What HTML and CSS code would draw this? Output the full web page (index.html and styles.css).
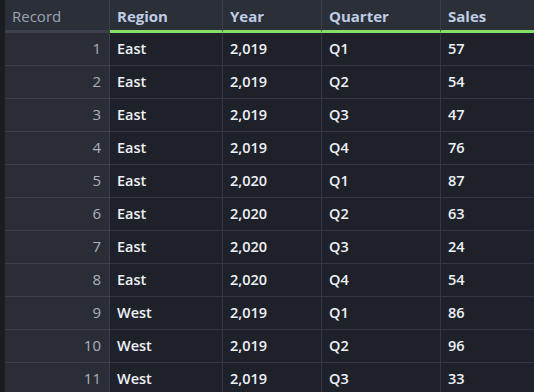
FILE: index.html
```html
<!DOCTYPE html>
<html>
<head>
<meta charset="utf-8">
<link rel="stylesheet" href="styles.css">
</head>
<body>
<div class="grid">
  <div class="hcell rec">Record</div>
  <div class="hcell col">Region</div>
  <div class="hcell col">Year</div>
  <div class="hcell col">Quarter</div>
  <div class="hcell col last">Sales</div>

  <div class="cell num">1</div><div class="cell">East</div><div class="cell">2,019</div><div class="cell">Q1</div><div class="cell last">57</div>
  <div class="cell num">2</div><div class="cell">East</div><div class="cell">2,019</div><div class="cell">Q2</div><div class="cell last">54</div>
  <div class="cell num">3</div><div class="cell">East</div><div class="cell">2,019</div><div class="cell">Q3</div><div class="cell last">47</div>
  <div class="cell num">4</div><div class="cell">East</div><div class="cell">2,019</div><div class="cell">Q4</div><div class="cell last">76</div>
  <div class="cell num">5</div><div class="cell">East</div><div class="cell">2,020</div><div class="cell">Q1</div><div class="cell last">87</div>
  <div class="cell num">6</div><div class="cell">East</div><div class="cell">2,020</div><div class="cell">Q2</div><div class="cell last">63</div>
  <div class="cell num">7</div><div class="cell">East</div><div class="cell">2,020</div><div class="cell">Q3</div><div class="cell last">24</div>
  <div class="cell num">8</div><div class="cell">East</div><div class="cell">2,020</div><div class="cell">Q4</div><div class="cell last">54</div>
  <div class="cell num">9</div><div class="cell">West</div><div class="cell">2,019</div><div class="cell">Q1</div><div class="cell last">86</div>
  <div class="cell num">10</div><div class="cell">West</div><div class="cell">2,019</div><div class="cell">Q2</div><div class="cell last">96</div>
  <div class="cell num">11</div><div class="cell">West</div><div class="cell">2,019</div><div class="cell">Q3</div><div class="cell last">33</div>
</div>
</body>
</html>
```
FILE: styles.css
```css
html, body {
  margin: 0;
  padding: 0;
  background: #1e2129;
  overflow: hidden;
}
body {
  width: 534px;
  height: 392px;
  font-family: "Open Sans", "Noto Sans", sans-serif;
  font-size: 14.5px;
}
.grid {
  display: grid;
  grid-template-columns: 105px 113px 99px 119px 1fr;
  grid-auto-rows: 33px;
  padding-left: 5px;
  background: #1a1c22;
}
.hcell {
  box-sizing: border-box;
  background: #2b2f38;
  border-right: 1px solid #3b404c;
  display: flex;
  align-items: center;
  padding-left: 7px;
  padding-top: 2px;
  height: 33px;
  font-size: 15px;
}
.hcell.rec {
  color: #9ba3b2;
  padding-left: 7px;
  border-bottom: 3px solid #3b404c;
}
.hcell.col {
  color: #bfcde4;
  font-weight: 700;
  border-bottom: 3px solid #86e067;
}
.cell {
  box-sizing: border-box;
  background: #1e2129;
  color: #eef1f6;
  font-weight: 600;
  border-right: 1px solid #343844;
  border-bottom: 1px solid #343844;
  display: flex;
  align-items: center;
  padding-left: 7px;
  padding-bottom: 2px;
}
.cell.num {
  background: #2a2d36;
  color: #aab1bd;
  font-weight: 400;
  font-size: 15px;
  justify-content: flex-end;
  padding-left: 0;
  padding-right: 8px;
  border-bottom-color: #3b404c;
  border-right-color: #3b404c;
}
.last {
  border-right: none;
}
```
